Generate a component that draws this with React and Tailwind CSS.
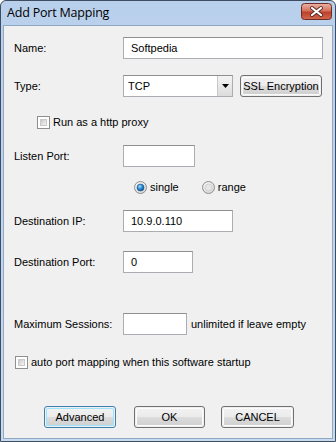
import React from 'react';

const font = { fontFamily: '"Liberation Sans", Arial, sans-serif' };

function Label({ children }) {
    return <div className="w-[109px] shrink-0 text-[11px] text-black">{children}</div>;
}

function TextBox({ value = '', width }) {
    return (
        <div
            className={`h-[22px] ${width} bg-white border border-[#abadb3] border-t-[#8e8f8f] flex items-center px-[7px] text-[11px] text-black`}
        >
            {value}
        </div>
    );
}

function CheckBox() {
    return (
        <div className="w-[13px] h-[13px] border border-[#8e8f8f] bg-white p-[2px] shrink-0">
            <div className="w-full h-full bg-[linear-gradient(135deg,#c8c8c8,#f6f6f6)] border border-[#c9c9c9]" />
        </div>
    );
}

function Radio({ checked }) {
    return (
        <svg width="13" height="13" viewBox="0 0 13 13" className="shrink-0">
            <defs>
                <radialGradient id="ring" cx="0.4" cy="0.35" r="0.7">
                    <stop offset="0" stopColor="#ffffff" />
                    <stop offset="1" stopColor="#d4d4d4" />
                </radialGradient>
                <radialGradient id="dot" cx="0.4" cy="0.35" r="0.7">
                    <stop offset="0" stopColor="#a9e3ff" />
                    <stop offset="0.5" stopColor="#2a8ad4" />
                    <stop offset="1" stopColor="#0d4f8c" />
                </radialGradient>
            </defs>
            <circle cx="6.5" cy="6.5" r="6" fill="url(#ring)" stroke="#8e8f8f" strokeWidth="1" />
            {checked ? (
                <circle cx="6.5" cy="6.5" r="3.5" fill="url(#dot)" stroke="#1c5180" strokeWidth="0.6" />
            ) : (
                <circle cx="6.5" cy="6.5" r="3.5" fill="#e6e6e6" stroke="#c0c0c0" strokeWidth="0.6" />
            )}
        </svg>
    );
}

function Button({ children, width, focused }) {
    return (
        <div
            className={`${width} h-[22px] rounded-[3px] border ${focused ? 'border-[#3c7fb1]' : 'border-[#707070]'} p-px`}
        >
            <div
                className={`w-full h-full rounded-[2px] flex items-center justify-center whitespace-nowrap text-[11px] text-black bg-[linear-gradient(#f2f2f2,#ebebeb_50%,#dddddd_50%,#cfcfcf)] ${focused ? 'shadow-[inset_0_0_0_1px_#9fe3fb]' : 'shadow-[inset_0_0_0_1px_#fcfcfc]'}`}
            >
                {children}
            </div>
        </div>
    );
}

function CloseButton() {
    return (
        <svg width="31" height="17" viewBox="0 0 31 17" className="mb-[3px]">
            <defs>
                <linearGradient id="closeBg" x1="0" y1="0" x2="0" y2="1">
                    <stop offset="0" stopColor="#eab4a6" />
                    <stop offset="0.45" stopColor="#d5725d" />
                    <stop offset="0.55" stopColor="#bd412b" />
                    <stop offset="1" stopColor="#d06a4f" />
                </linearGradient>
            </defs>
            <rect x="0.5" y="0.5" width="30" height="16" rx="3" fill="url(#closeBg)" stroke="#6f2b25" />
            <path d="M11 5 L20 12 M20 5 L11 12" stroke="#5a2a25" strokeWidth="4" strokeLinecap="round" />
            <path d="M11 5 L20 12 M20 5 L11 12" stroke="#ffffff" strokeWidth="2.2" strokeLinecap="round" />
        </svg>
    );
}

export default function App() {
    return (
        <div className="w-[336px] h-[442px] bg-white" style={font}>
            <div className="w-full h-full flex flex-col border border-[#3e4d60] rounded-t-[6px] overflow-hidden bg-[linear-gradient(#b9d0ec,#c6daf0)]">

                {/* Title bar */}
                <div className="h-[24px] shrink-0 flex items-center justify-between pl-[6px] pr-[3px]">
                    <span className="text-[12.5px] text-black tracking-[-0.2px]" style={{ fontFamily: '"Open Sans", "Liberation Sans", sans-serif' }}>
                        Add Port Mapping
                    </span>
                    <CloseButton />
                </div>

                {/* Client area */}
                <div className="flex-1 mx-[2px] mb-[2px] bg-[#f0f0f0] border border-[#8fa8c6] pl-[10px]">

                    <div className="mt-[11px] h-[22px] flex items-center">
                        <Label>Name:</Label>
                        <TextBox value="Softpedia" width="w-[200px]" />
                    </div>

                    <div className="mt-[16px] h-[22px] flex items-center">
                        <Label>Type:</Label>
                        <div className="w-[110px] h-[22px] bg-white border border-[#abadb3] border-t-[#8e8f8f] flex items-stretch">
                            <div className="flex-1 flex items-center px-[4px] text-[11px] text-black">TCP</div>
                            <div className="w-[15px] border-l border-[#c9c9c9] bg-[linear-gradient(#f4f4f4,#dcdcdc)] flex items-center justify-center">
                                <svg width="7" height="4" viewBox="0 0 7 4">
                                    <path d="M0 0 H7 L3.5 4 Z" fill="#000" />
                                </svg>
                            </div>
                        </div>
                        <div className="ml-[7px]">
                            <Button width="w-[82px]">SSL Encryption</Button>
                        </div>
                    </div>

                    <div className="mt-[19px] h-[13px] flex items-center pl-[23px] gap-[3px]">
                        <CheckBox />
                        <span className="text-[11px] text-black">Run as a http proxy</span>
                    </div>

                    <div className="mt-[16px] h-[22px] flex items-center">
                        <Label>Listen Port:</Label>
                        <TextBox width="w-[72px]" />
                    </div>

                    <div className="mt-[14px] h-[13px] flex items-center pl-[120px]">
                        <Radio checked />
                        <span className="ml-[3px] text-[11px] text-black">single</span>
                        <div className="ml-[23px]">
                            <Radio />
                        </div>
                        <span className="ml-[3px] text-[11px] text-black">range</span>
                    </div>

                    <div className="mt-[16px] h-[22px] flex items-center">
                        <Label>Destination IP:</Label>
                        <TextBox value="10.9.0.110" width="w-[110px]" />
                    </div>

                    <div className="mt-[19px] h-[22px] flex items-center">
                        <Label>Destination Port:</Label>
                        <TextBox value="0" width="w-[70px]" />
                    </div>

                    <div className="mt-[40px] h-[22px] flex items-center">
                        <Label>Maximum Sessions:</Label>
                        <TextBox width="w-[64px]" />
                        <span className="ml-[4px] text-[11px] text-black">unlimited if leave empty</span>
                    </div>

                    <div className="mt-[21px] h-[13px] flex items-center pl-px gap-[3px]">
                        <CheckBox />
                        <span className="text-[11px] text-black">auto port mapping when this software startup</span>
                    </div>

                    <div className="mt-[37px] flex items-center pl-[30px] gap-[18px]">
                        <Button width="w-[72px]" focused>Advanced</Button>
                        <Button width="w-[71px]">OK</Button>
                        <div className="ml-[-2px]">
                            <Button width="w-[73px]">CANCEL</Button>
                        </div>
                    </div>
                </div>
            </div>
        </div>
    );
}
